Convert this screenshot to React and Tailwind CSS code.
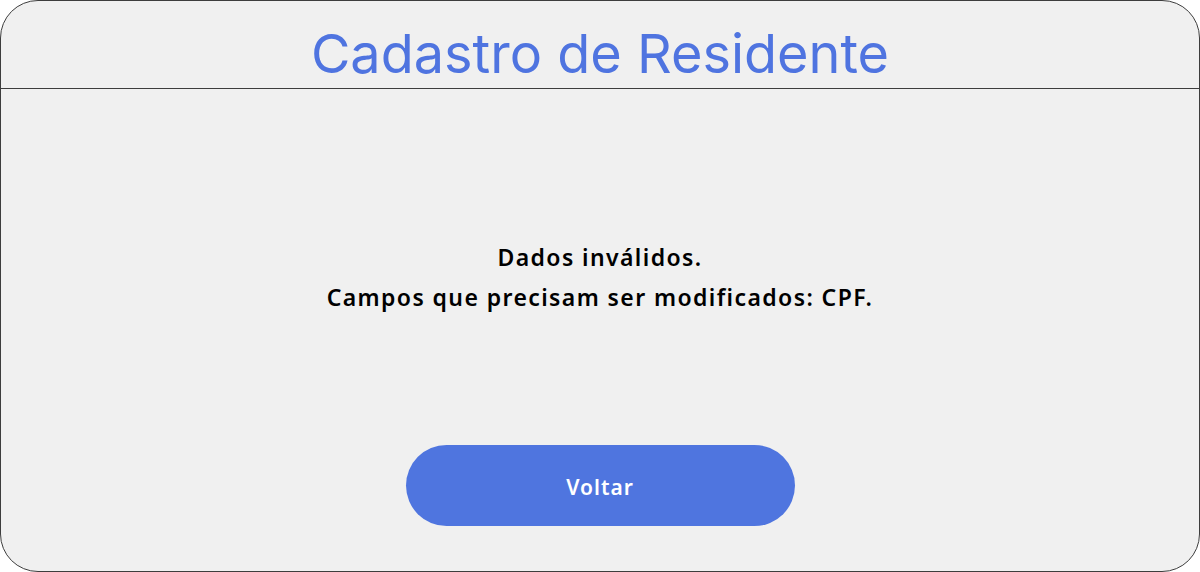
import React from 'react';

const App = () => {
    return (
        <div className="w-[1200px] h-[572px] bg-white">
            <div className="w-full h-full border border-[#3d3d3d] rounded-[38px] bg-[#f0f0f0] overflow-hidden flex flex-col">
                {/* Header */}
                <div className="h-[88px] border-b border-[#3d3d3d] flex items-center justify-center">
                    <h1 className="text-[54px] leading-none text-[#4f74e0] font-['Inter',sans-serif] font-normal mt-[18px]">
                        Cadastro de Residente
                    </h1>
                </div>

                {/* Message */}
                <div className="flex-1 flex flex-col items-center pt-[148px]">
                    <div className="text-center text-black font-['Noto_Sans',sans-serif] font-semibold text-[23px] tracking-[1.4px] leading-[40px]">
                        <p>Dados inválidos.</p>
                        <p>Campos que precisam ser modificados: CPF.</p>
                    </div>
                    <button className="mt-[128px] w-[389px] h-[81px] rounded-full bg-[#4f75df] text-white font-['Noto_Sans',sans-serif] font-semibold text-[21px] tracking-[1px] pt-[4px]">
                        Voltar
                    </button>
                </div>
            </div>
        </div>
    );
};

export default App;
